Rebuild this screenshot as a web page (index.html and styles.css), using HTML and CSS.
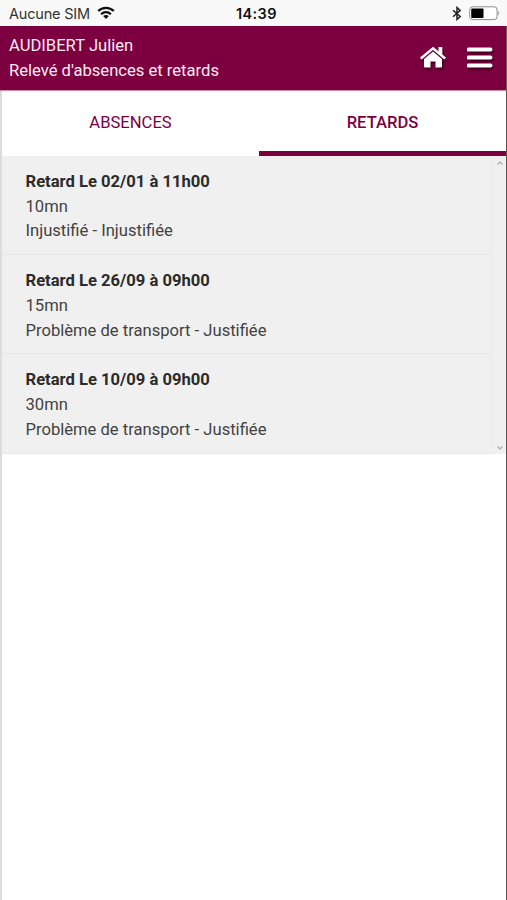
FILE: index.html
```html
<!DOCTYPE html>
<html lang="fr">
<head>
<meta charset="utf-8">
<title>Relevé d'absences et retards</title>
<link rel="stylesheet" href="styles.css">
</head>
<body>
<div class="status">
  <span class="carrier">Aucune SIM</span>
  <svg class="wifi" width="18" height="14" viewBox="0 0 18 14"><g fill="none" stroke="#111" stroke-width="2.2"><path d="M1.2 5.1C5.5.7 12.5.7 16.8 5.1"/><path d="M4.1 8.2C6.8 5.4 11.2 5.4 13.9 8.2"/></g><path d="M9 13 6.2 10.1Q9 7.8 11.8 10.1Z" fill="#111"/></svg>
  <span class="time">14:39</span>
  <svg class="bluetooth" width="10" height="15" viewBox="0 0 10 15"><path d="M1 4.2 8.2 10.5 5 13.4V1.5L8.2 4.4 1 10.8" fill="none" stroke="#222" stroke-width="1.5"/></svg>
  <svg class="battery" width="32" height="15" viewBox="0 0 32 15"><rect x=".7" y=".8" width="27.4" height="12.8" rx="3" fill="#fff" stroke="#8c8c8c"/><rect x="2.2" y="2.6" width="12.3" height="9.4" rx="1" fill="#000"/><path d="M29.3 5Q31.2 7.2 29.3 9.4Z" fill="#8c8c8c"/></svg>
</div>
<div class="app">
  <header class="header">
    <div class="titles"><div class="name">AUDIBERT Julien</div><div class="subtitle">Relevé d'absences et retards</div></div>
    <svg class="home" width="28" height="24" viewBox="0 0 28 24"><path d="M5 13 14 5.500 23 13V20.500Q23 21.500 22 21.500H16.500V15.500H11.500V21.500H6Q5 21.500 5 20.500Z" fill="#fff"/><path d="M1.800 12.500 14 2.300 26.200 12.500" fill="none" stroke="#7c003f" stroke-width="1" transform="translate(0 2.200)"/><path d="M1.800 12.500 14 2.300 26.200 12.500" fill="none" stroke="#fff" stroke-width="2.500"/><path d="M19.500 1H23.300V9.500L19.500 6.500Z" fill="#fff"/></svg>
    <svg class="menu" width="26" height="24" viewBox="0 0 26 24"><path d="M1.500 3.500H23.500M1.500 11.500H23.500M1.500 19.500H23.500" stroke="#fff" stroke-width="4" stroke-linecap="round"/></svg>
  </header>
  <nav class="tabs"><div class="tab"><span class="tab-absences">ABSENCES</span></div><div class="tab active"><span class="tab-retards">RETARDS</span></div></nav>
  <main class="panel">
    <div class="list">
      <section class="item"><div class="when">Retard Le 02/01 à 11h00</div><div>10mn</div><div>Injustifié - Injustifiée</div></section>
      <section class="item"><div class="when">Retard Le 26/09 à 09h00</div><div>15mn</div><div>Problème de transport - Justifiée</div></section>
      <section class="item"><div class="when">Retard Le 10/09 à 09h00</div><div>30mn</div><div>Problème de transport - Justifiée</div></section>
    </div>
    <div class="scroll">
      <svg width="8" height="6" viewBox="0 0 8 6"><path d="M1.500 4.500 4 2 6.500 4.500" fill="none" stroke="#b5b5b5" stroke-width="1.500"/></svg>
      <svg width="8" height="6" viewBox="0 0 8 6"><path d="M1.500 1.500 4 4 6.500 1.500" fill="none" stroke="#b5b5b5" stroke-width="1.500"/></svg>
    </div>
  </main>
</div>
</body>
</html>
```
FILE: styles.css
```css
* { box-sizing: border-box; }
body { margin: 0; height: 900px; background: #fff; font-family: Roboto, sans-serif; display: flex; flex-direction: column; overflow: hidden; }
svg { display: block; flex: none; }
.status { height: 26px; flex: none; display: grid; grid-template-columns: 88px 139px 209px 10px 1fr; background: #f9f9f9; color: #111; font-family: Inter, sans-serif; font-size: 14.5px; line-height: 18px; padding: 5px 0 0 9px; white-space: nowrap; }
.carrier { color: #333; letter-spacing: -0.2px; }
.time { font-weight: 600; letter-spacing: 0.4px; }
.wifi, .battery { margin-top: 1px; }
.bluetooth { margin-left: 7px; margin-top: 1px; }
.battery { margin-left: 14px; }
.app { flex: 1; border-left: 2px solid #dcdcdc; border-right: 1px solid #555; }
.header { height: 64px; margin-left: -2px; display: flex; background: #7c003f; color: #ffeaf4; font-size: 16.6px; line-height: 25px; padding: 7px 13px 0 9px; box-shadow: 0 1px 1px #c993ad; }
.titles { flex: 1; white-space: nowrap; }
.home { margin: 13px 20px 0 0; filter: drop-shadow(1px 2px 1px #3c001e); }
.menu { margin-top: 13px; filter: drop-shadow(1px 2px 1px #3c001e); }
.tabs { height: 66px; display: flex; color: #7c003f; font-size: 16.6px; line-height: 24px; }
.tab { width: 257px; padding-top: 21px; text-align: center; }
.tab.active { width: 247px; font-weight: 500; border-bottom: 5px solid #7c003f; }
.panel { height: 298px; display: flex; background: #f0f0f0; color: #424242; font-size: 16.6px; line-height: 24.8px; }
.list { width: 491px; border-right: 1px solid #ececec; }
.item { height: 99.2px; padding: 13.8px 0 0 23.5px; border-bottom: 1px solid #e7e7e7; white-space: nowrap; }
.when { color: #2b2b2b; font-weight: 700; }
.scroll { flex: 1; display: flex; flex-direction: column; justify-content: space-between; align-items: center; padding: 4px 0 3px 1px; }
```
